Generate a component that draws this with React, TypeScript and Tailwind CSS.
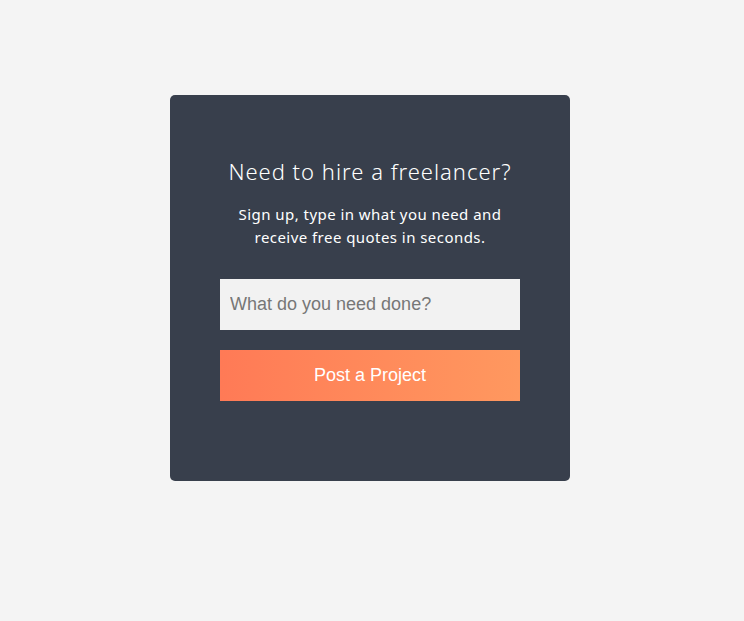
export default function App() {
  return (
    <div className="min-h-screen bg-[#f4f4f4] pt-[95px]">
      <div className="ml-[170px] flex h-[386px] w-[400px] flex-col items-center rounded-[5px] bg-[#383f4c] px-[50px] pt-[60px] font-['Noto_Sans',sans-serif]">
        <h2 className="text-[22px] font-light leading-[33px] tracking-[1px] text-white">
          Need to hire a freelancer?
        </h2>
        <p className="mt-[15px] text-center text-[15px] leading-[23px] tracking-[0.45px] text-white">
          Sign up, type in what you need and
          <br />
          receive free quotes in seconds.
        </p>
        <input
          type="text"
          placeholder="What do you need done?"
          className="mt-[30px] h-[51px] w-[300px] bg-[#f2f2f2] px-[10px] font-['Liberation_Sans',Arial,sans-serif] text-[18px] text-gray-800 outline-none placeholder:text-[#777]"
        />
        <button className="mt-[20px] h-[51px] w-[300px] bg-gradient-to-r from-[#ff7a56] to-[#ff985f] font-['Liberation_Sans',Arial,sans-serif] text-[18px] text-white">
          Post a Project
        </button>
      </div>
    </div>
  )
}
